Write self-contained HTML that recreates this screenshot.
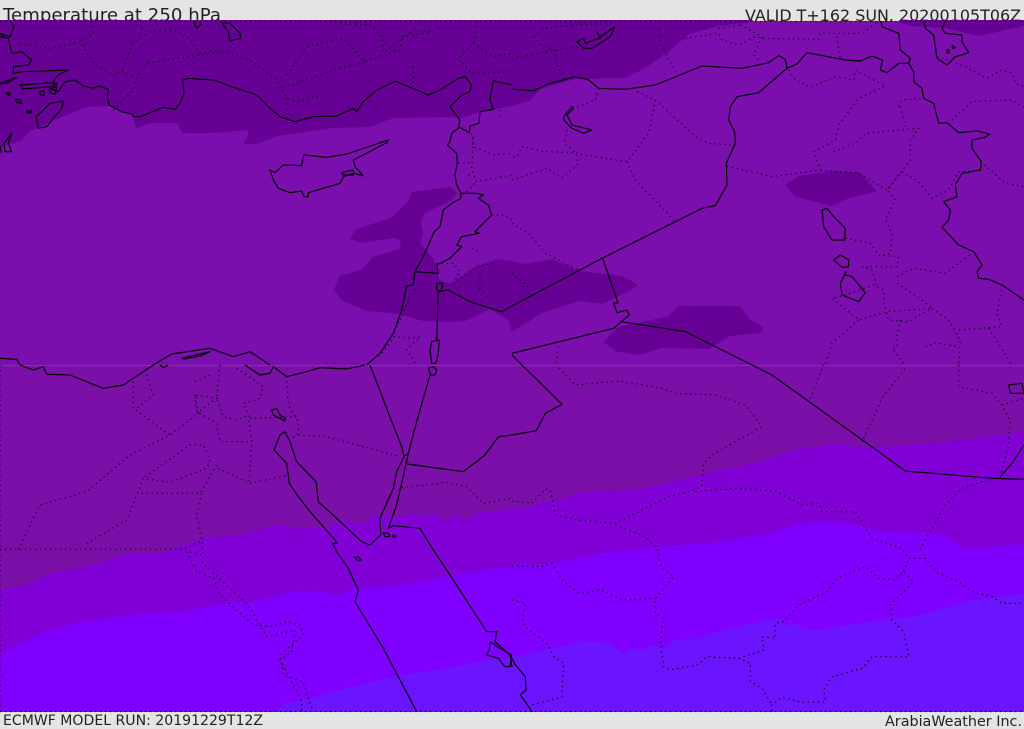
<!DOCTYPE html>
<html><head><meta charset="utf-8"><style>
html,body{margin:0;padding:0;background:#e4e4e4;width:1024px;height:729px;overflow:hidden}
svg{display:block}
.c{fill:none;stroke:#000;stroke-width:1.15;vector-effect:non-scaling-stroke;stroke-linejoin:round}
.d{fill:none;stroke:#0a0020;stroke-width:1.2;stroke-dasharray:1.3 3.7;vector-effect:non-scaling-stroke}
text{font-family:"DejaVu Sans","Liberation Sans",sans-serif;fill:#222}
</style></head><body>
<svg width="1024" height="729" viewBox="0 0 1024 729" xmlns="http://www.w3.org/2000/svg">
<rect width="1024" height="729" fill="#e4e4e4"/>
<text x="3" y="21" font-size="18" textLength="218" lengthAdjust="spacingAndGlyphs">Temperature at 250 hPa</text>
<text x="1021" y="21" font-size="16" text-anchor="end" textLength="276" lengthAdjust="spacingAndGlyphs">VALID T+162 SUN. 20200105T06Z</text>
<text x="3" y="725" font-size="14" textLength="260" lengthAdjust="spacingAndGlyphs">ECMWF MODEL RUN: 20191229T12Z</text>
<text x="885" y="726" font-size="14.3" textLength="137" lengthAdjust="spacingAndGlyphs">ArabiaWeather Inc.</text>

<rect x="0" y="21" width="1024" height="345" fill="#7b0fad"/>
<rect x="0" y="365" width="1024" height="347" fill="#7a10a8"/>
<rect x="0" y="365" width="1024" height="1" fill="#8a2cb4"/>
<!-- dark band -->
<g fill="#660094" stroke="#660094" stroke-width="2" stroke-linejoin="round">
<path d="M0 21H752L719 25 689 33 669 50 645 67 625 77 590 78 575 78 540 88 529 100 512 105 477 112 462 117 447 116 393 117 370 126 333 127 277 135 257 143 245 143 250 135 248 129 213 132 183 132 177 122 150 122 137 127 133 115 110 105 87 106 57 118 30 130 20 140 0 147Z"/>
<path d="M900 21H1024V25L1002 30 979 35 945 27 912 25Z"/>
<path d="M335 290 340 277 363 270 373 258 400 250 402 240 395 237 360 242 351 238 357 230 393 218 408 203 413 193 450 188 456 193 450 200 423 213 420 223 422 233 419 243 433 260 438 280 450 285 477 267 497 260 512 262 525 265 552 260 579 272 622 277 636 285 629 290 602 303 579 300 539 313 525 323 512 330 510 320 490 308 465 320 450 321 423 320 400 313 367 310 343 300Z"/>
<path d="M787 185 799 177 832 172 859 173 875 191 849 197 832 205 812 200 795 195Z"/>
<path d="M605 342 619 328 669 317 679 307 739 307 749 320 762 328 760 332 729 335 709 348 662 347 639 354 615 350Z"/>
</g>
<!-- band 3 -->
<path fill="#8000d6" d="M0 590 27 585 50 573 83 568 130 553 163 553 203 538 240 535 277 524 300 529 327 527 347 520 365 525 370 517 383 515 400 517 413 513 423 517 433 513 445 521 453 515 465 520 477 513 512 509 529 508 539 502 562 500 575 493 645 489 685 478 759 462 795 450 839 443 862 448 945 442 1024 432V712H0Z"/>
<!-- band 4 -->
<path fill="#8000ff" d="M0 656 20 643 43 632 80 622 133 615 180 612 227 603 250 602 293 592 317 591 337 595 357 587 383 588 417 582 453 575 490 569 512 567 522 564 539 566 552 563 579 558 612 552 659 547 712 543 739 538 765 535 799 524 822 522 849 523 879 531 929 533 949 537 960 547 975 549 1024 544V712H0Z"/>
<!-- band 5 -->
<path fill="#6a14ff" d="M273 712 287 703 317 697 350 687 400 675 450 668 480 661 512 657 532 653 569 645 579 641 602 642 612 645 624 655 629 648 642 650 652 645 665 648 675 640 695 639 725 630 759 622 779 617 787 627 795 623 805 630 825 629 852 624 912 617 939 610 969 601 1024 594V712Z"/>

<path class="d" d="M0 21.5H1024M0 711.5H1024"/>

<!-- Q1 -->
<g transform="scale(.33333)">
<path class="c" d="M30 63 42 80 30 110 0 100M0 110 25 115 35 160 65 155 95 180 85 195 40 200 40 220 70 215 205 210 175 225 160 245 170 255 155 268 175 275 195 245 225 240 250 258 280 265 295 258 325 268 322 290 328 315 365 335 395 342 400 350 420 350 490 322 525 328 540 310 552 280 548 240 565 235 640 240 700 262 770 285 810 325 840 350 885 365 940 350 1010 348 1060 325 1070 335 1090 305 1130 270 1185 244 1215 255 1285 285 1320 270 1375 235 1395 230 1415 255 1410 275 1385 285 1350 320 1380 360 1375 385 1355 400 1350 425 1342 435 1370 460 1372 490 1365 525 1370 555 1383 580 1382 595 1355 610 1330 630 1320 680 1303 695 1270 770 1245 815 1240 855 1220 858 1205 930 1180 1000 1140 1060 1100 1095"/>
<path class="c" d="M0 1075 50 1078 60 1095M460 1095 515 1062 630 1045 700 1070 750 1055 780 1075 810 1095M545 1075 630 1055 600 1068 550 1078"/>
<path class="c" d="M1383 580H1430L1450 585 1435 595 1465 615 1475 645 1425 695 1438 700 1385 710 1370 735 1385 740 1350 775 1310 795 1315 820 1245 815M1318 875 1345 870 1410 905 1505 935 1536 918M1315 875 1310 1020M1295 1025 1318 1020 1315 1060 1308 1090 1295 1090 1290 1050ZM1310 850H1328L1325 870 1315 875 1310 865Z"/>
<path class="c" d="M1470 300 1480 243 1536 255M1470 300 1480 328 1440 335 1437 370 1410 378 1408 398 1375 380"/>
<path class="c" d="M810 510 825 518 850 495 905 497 912 465 980 472 1040 462 1165 420 1160 428 1090 465 1060 480 1065 500 1090 528 1060 520 1030 530 1020 550 960 568 925 578 925 590 912 590 905 573 870 578 835 565 820 540ZM1025 518 1060 510 1060 525 1030 525Z"/>
<path class="c" d="M125 335 150 310 190 303 185 325 140 380 115 385 108 350ZM35 400 25 430 35 455 15 455 12 430ZM60 255 160 248 170 250 150 260 70 267ZM0 250 50 232 25 248 0 252M20 278H30V285L20 283ZM45 297 60 300 65 310 50 308ZM80 333H95V338H80ZM120 275 132 272V288L120 283ZM150 265 170 262 165 283 150 278ZM665 68 690 70 720 100 722 115 690 123 685 95ZM580 63 590 85 605 70M0 100 10 110M0 440 5 460"/>
<path class="d" d="M60 130 150 145 200 135 240 125 280 190 340 225 370 210M275 65 280 100 240 125M410 75 440 95 520 90 570 115 600 160 670 150M395 130 440 100M395 130 380 180 365 215 400 230M340 330 400 270 410 230 440 190 530 175 670 155 750 180 830 240 845 265M860 225 920 140 1030 115 1095 185 1120 175 1200 150 1205 110 1300 95 1240 90 1150 160M1095 185 1000 210 920 240 845 265 860 295 900 305 960 285M990 70 1110 75 1145 110 1150 160M860 295 865 355M1435 65 1420 130 1375 175 1415 220 1536 215M1420 130 1480 170 1536 160M1240 200 1240 250M1415 400 1420 440 1480 465 1536 460M1420 410 1415 510 1430 545 1536 525M1375 490 1420 488M1405 525 1425 530M1400 575 1430 545M1475 645 1510 645 1536 660M1415 745 1435 755M1310 790 1360 790 1380 815 1360 850 1430 800 1480 790M1440 820 1440 870 1460 890M1235 885 1250 865M1200 960 1230 890M1180 1010 1230 1015 1260 1010 1220 1050 1250 1095M1200 950 1180 1015 1130 1080M1500 330 1500 360"/>
</g>
<!-- Q2 -->
<g transform="translate(512,0) scale(.33333)">
<path class="c" d="M0 268 65 272 105 253 190 230 230 240 260 265 340 268 430 255 570 198 690 205 770 188 800 167 820 178 825 205M0 918 270 775 570 625 610 617 645 555 643 490 670 430 668 395 650 360 655 320 675 290 740 278 825 205 855 192 885 158 1000 180 1045 183 1080 168 1112 180 1105 210 1125 218 1160 190 1190 190"/>
<path class="c" d="M1107 63 1110 80 1160 100 1165 150 1195 175 1190 190 1205 215 1205 245 1230 265 1235 295 1265 310 1280 370 1305 368 1340 398 1395 393 1433 402 1420 412 1380 420 1380 445 1408 485 1405 510 1350 520 1330 555 1335 590 1295 605 1315 630 1310 660 1290 682 1340 735 1385 755 1410 795 1395 815 1400 835 1430 838 1470 855 1536 900"/>
<path class="c" d="M0 1060 305 985 352 945 345 930 315 938 305 910 318 908 272 775M328 965 520 995 720 1095M0 1065 30 1095"/>
<path class="c" d="M1235 63 1240 85 1265 105 1275 175 1305 195 1330 170 1370 158 1350 125 1350 105 1300 100 1290 85 1300 63M1305 150 1312 150 1310 160 1304 158ZM1320 137 1330 142 1322 146Z"/>
<path class="c" d="M155 350 180 320 185 325 165 345 180 375 240 390 215 400 180 385 155 360ZM195 125 215 115 220 130 260 115 300 85 308 80 295 110 240 145 215 145ZM255 95 265 118"/>
<path class="c" d="M930 630 945 625 965 650 1000 685 998 720 960 720 935 680ZM965 780 985 765 1010 780 1010 800 990 802ZM1002 815 1000 825 1020 830 1060 878 1040 905 990 885 985 850Z"/>
<path class="d" d="M65 110 100 85 180 75 310 70M65 110 90 135 130 150M0 175 130 150 195 140M130 150 135 200 160 240M440 90 445 130 490 215M520 115 620 100 630 120 680 135 730 110 750 115 920 118 925 100 1050 100 1100 65M620 85 685 75M685 75 750 110 725 165 745 185M975 110 985 175M830 210 850 240 895 262 970 230 1025 240 1030 210 1120 258 1040 295 980 375 970 420 905 455 925 510M260 265 250 300 200 320 185 325M375 275 430 300 550 410 590 430 660 435M430 300 410 400 345 485 200 462 195 458 100 455 30 440 15 470 0 470M165 390 158 430 190 458 200 490 150 535 105 505 0 540M345 485 370 540 490 665M645 498 780 530 925 510 1040 520 1125 570 1170 515 1220 545 1260 595 1310 570 1340 515 1405 510M965 455 1040 425 1060 400 1220 385 1195 420 1195 480 1125 570 1150 600 1120 660 1140 700 1135 760 1110 765M1160 320 1170 300 1225 295M1165 320 1180 380M1320 360 1380 305 1500 300 1536 320M1275 170 1360 200 1425 235 1470 210 1500 220 1510 250 1536 260M1405 485 1480 550 1536 560M1000 715 1075 730 1100 765 1160 770 1155 800 1050 800 1080 810 1095 860M1155 830 1205 805 1300 820 1380 760M1155 850 1230 900 1260 925 1125 935 1040 960 960 895 1000 885 1085 855 1115 870 1115 910 1130 960 1190 965 1260 925 1310 960 1345 1020 1340 1095M1040 960 1000 995 960 1030 940 1095M1165 960 1155 1000 1155 1040 1140 1045 1180 1095M1240 1040 1270 1028 1340 1040M1470 870 1455 940 1470 980 1340 990M1430 985 1500 1095M0 670 50 700 100 760 200 810M0 820 60 870M140 1040 130 1095"/>
</g>
<!-- Q3 -->
<g transform="translate(0,365) scale(.33333)">
<path class="c" d="M60 0 100 15 130 5 140 28 210 30 310 70 370 60 460 0M735 0 780 30 810 25 820 5 860 35 920 20 960 8 1040 12 1095 0M480 0 490 8 505 0"/>
<path class="c" d="M1110 0 1160 130 1205 245 1212 275 1225 265 1215 310 1190 420 1165 490 1180 482 1260 490 1300 555 1350 630 1460 800 1490 800 1485 830 1530 870 1536 905M1212 275 1190 320 1180 370 1140 460 1142 510 1110 540 1085 530 1010 460 955 410 948 350 890 290 870 230 855 200 840 210 822 255 860 295 868 355 895 395 930 440 1005 525 1012 535 998 535 1010 560 1045 610 1075 675 1065 710 1150 850 1250 1040"/>
<path class="c" d="M1285 10 1300 5 1310 15 1305 30 1292 30ZM1290 30 1250 170 1225 265M1536 210 1495 215 1455 270 1390 320 1222 297"/>
<path class="c" d="M1150 503 1165 505 1170 515 1155 515ZM1178 510 1188 512 1185 517 1178 515ZM1062 577 1075 575 1083 585 1075 588ZM815 135 830 130 840 150 855 160 855 168 840 160 820 150ZM1470 830 1500 850 1535 870 1530 905 1515 905 1495 880 1460 870 1468 855Z"/>
<path class="d" d="M0 0V1040M0 553H550L610 525M55 553 120 420 260 380 390 270 510 210 595 145 585 90 650 100 590 145M400 50 400 130 510 210M440 30 460 90 405 135M585 50 630 30M660 0 650 100 670 155 710 165 745 150M585 90 590 140 650 175 660 230 755 230M710 10 790 65 780 100 730 115 745 150 755 230 748 350M860 35 865 120 895 170 895 205 870 225M750 160 895 155M895 210 980 215 1200 275M655 310 750 355 865 330M260 535 380 465 430 340 510 352 620 310 630 285 610 240 570 240 435 335M425 385 600 385 650 300M605 385 590 450 605 525 610 570 560 560 590 620 640 640 660 690 760 780 810 785 860 770 900 780 910 810 840 870 850 930 910 950 925 1000 940 1040M605 590 700 680 745 720 800 815 885 795 875 860 840 885 870 940 905 1010 905 1040M1205 368 1340 352 1400 365 1450 415 1536 400"/>
</g>
<!-- Q4 -->
<g transform="translate(512,365) scale(.33333)">
<path class="c" d="M30 0 150 118 100 145 73 197 0 210M720 0 780 30 1180 318 1440 340 1536 343M1536 240 1500 295 1465 335M0 880 10 900 40 935 42 975 25 990 50 1025 60 1040M1490 60 1530 55 1536 85 1495 85Z"/>
<path class="d" d="M140 10 190 60 320 48 450 70 490 85 610 90 700 120 750 185 600 270 575 295 570 360 550 375 470 395 310 475 200 465 130 450 115 375 100 372 60 415 0 408M550 380 670 370 790 378 870 420 920 415 930 440 1030 440 1080 520 1170 550 1190 580 1240 580 1270 620 1340 650 1380 680 1440 695 1470 715 1536 715M310 480 400 515 435 550 450 610 485 635 430 700 430 745 455 760 445 830 455 905 475 915 555 900 585 875 680 880 755 855 750 815 790 820 790 775 815 770 860 720 945 680 975 640 1060 605 1100 640 1150 645 1175 620 1205 650 1135 720 1140 765 1175 800 1190 875 1080 875 1050 910 960 935 935 975 940 1010 870 1012 810 997 780 1020 780 1040M1175 620 1190 580M0 603 90 605 120 595 150 645 200 685 270 675 330 705 430 700M0 705 40 715 30 770 50 795 100 830 130 880 155 895 150 995 60 1020M680 880 715 895 715 950 750 970 780 1020M895 100 935 0M1055 220 1110 100 1180 10M1340 0 1340 65 1440 85 1470 120 1495 170 1490 240 1465 335M1470 120 1536 100M1440 340 1350 370 1300 420 1220 560"/>
</g>
</svg>
</body></html>
